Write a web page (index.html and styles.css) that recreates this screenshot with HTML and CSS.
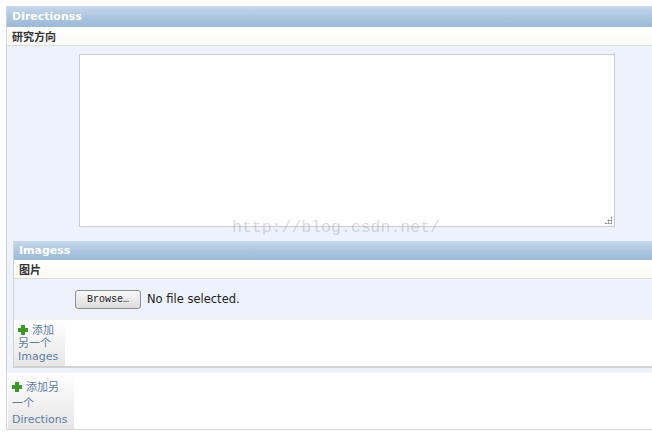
FILE: index.html
```html
<!DOCTYPE html>
<html>
<head>
<meta charset="utf-8">
<link rel="stylesheet" href="styles.css">
</head>
<body>
<div class="group outer">
  <div class="group-head head-lg">Directionss</div>
  <div class="field-label">研究方向</div>
  <div class="body">
    <div class="ta-row">
      <div class="textarea"><span class="grip"></span></div>
    </div>
    <div class="group inner">
      <div class="group-head">Imagess</div>
      <div class="field-label">图片</div>
      <div class="file-row">
        <span class="browse">Browse…</span>
        <span class="nofile">No file selected.</span>
      </div>
      <div class="add-row">
        <a class="add add-sm"><span class="plus"></span>添加另一个 Images</a>
      </div>
    </div>
  </div>
  <div class="add-row outer-add">
    <a class="add add-lg"><span class="plus"></span>添加另一个 Directions</a>
  </div>
</div>
<div class="watermark">http://blog.csdn.net/</div>
</body>
</html>
```
FILE: styles.css
```css
html, body { margin: 0; padding: 0; background: #fff; }
body { font-family: "DejaVu Sans", Verdana, "Noto Sans CJK SC", sans-serif; font-size: 11px; color: #333; position: relative; width: 652px; height: 435px; overflow: hidden; }

.group { border-left: 1px solid #cfd3da; }
.outer { margin: 6px 0 0 6px; width: 700px; border-bottom: 1px solid #d6d6d6; }

.group-head {
  height: 19px; line-height: 20px;
  padding-left: 5px;
  background: linear-gradient(#c6d8ec, #a9c3de 60%, #9cb9d8);
  color: #fff; font-weight: bold; font-size: 11px;
}
.head-lg { height: 21px; line-height: 21px; }
.field-label {
  height: 18px; line-height: 19px;
  padding-left: 5px;
  background: linear-gradient(#fff, #fafaf6);
  border-bottom: 1px solid #dcdcdc;
  font-weight: bold; font-size: 11px; color: #333;
  font-family: "Noto Sans CJK SC", sans-serif;
}
.body { background: #edf2fc; padding: 8px 0 0 6px; }
.ta-row { padding-left: 66px; height: 187px; }
.textarea {
  width: 534px; height: 171px; background: #fff;
  border: 1px solid #c8ccd4; position: relative;
}
.grip {
  position: absolute; right: 2px; bottom: 2px; width: 8px; height: 8px;
  background: radial-gradient(circle, #888 0.9px, transparent 1.2px) 0 0 / 3px 3px;
  clip-path: polygon(100% 0, 100% 100%, 0 100%);
}
.inner { border-bottom: 2px solid #d2d2d2; }
.file-row {
  height: 40px; background: #edf2fc; display: flex; align-items: center;
  padding-left: 61px; border-bottom: 1px solid #f2f2f2;
}
.browse {
  display: inline-block; height: 17px; line-height: 17px; width: 64px;
  text-align: center; border: 1px solid #8e8e8e; border-radius: 3px;
  background: linear-gradient(#f8f8f8, #dcdcdc);
  font-family: "Liberation Mono", monospace; font-size: 10px; color: #222;
}
.nofile { margin-left: 6px; font-size: 11.5px; color: #222; font-family: "DejaVu Sans", sans-serif; }
.add-row { background: #fff; display: flex; }
.add {
  display: block; color: #5e7ea6; font-size: 11px; line-height: 13px;
  background: linear-gradient(#fff, #e6e6e6);
  font-family: "DejaVu Sans", "Noto Sans CJK SC", sans-serif;
}
.add-sm { width: 44px; padding: 4px 3px 3px 4px; height: 39px; }
.add-lg { width: 52px; padding: 7px 10px 0 4px; height: 49px; margin-left: 1px; line-height: 16px; }
.plus {
  display: inline-block; width: 10px; height: 10px; margin-right: 4px; vertical-align: -1px;
  background:
    linear-gradient(#3d9a2a, #3d9a2a) center / 4px 10px no-repeat,
    linear-gradient(#3d9a2a, #3d9a2a) center / 10px 4px no-repeat;
}
.outer > .add-row { border-top: 5px solid #edf2fc; }
.watermark {
  position: absolute; left: 232px; top: 218px;
  font-family: "Liberation Mono", monospace; font-size: 16.5px; color: rgba(160,160,160,0.4);
}
```
